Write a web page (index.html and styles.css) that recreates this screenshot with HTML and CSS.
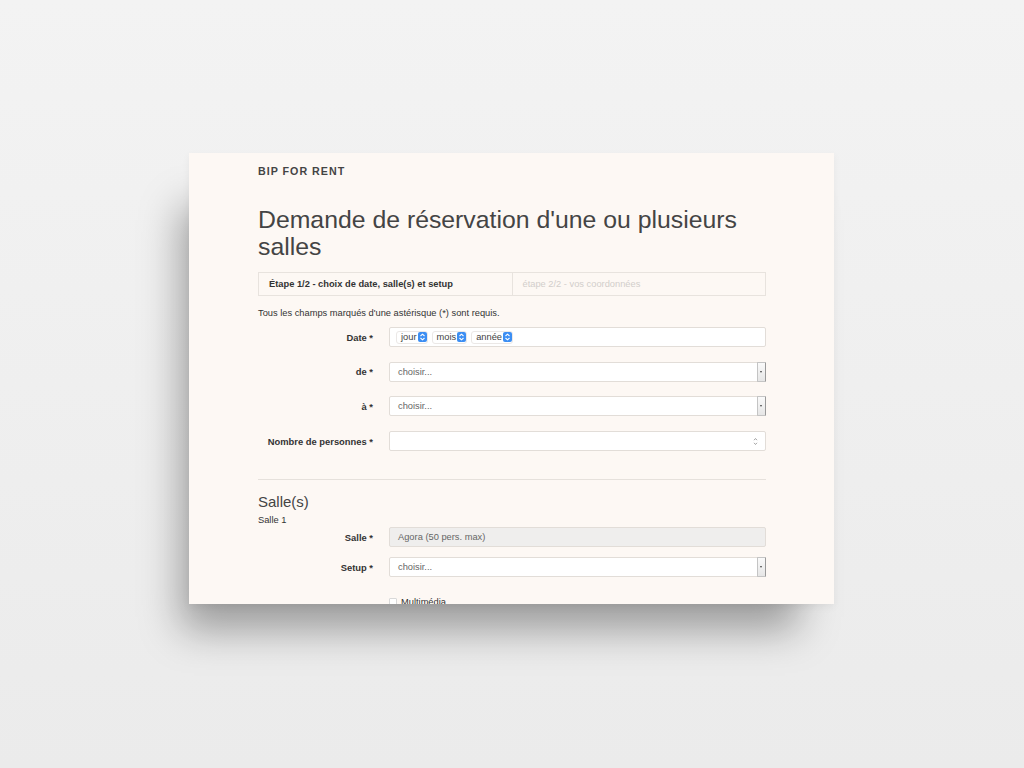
FILE: index.html
```html
<!DOCTYPE html>
<html lang="fr">
<head>
  <meta charset="UTF-8">
  <meta name="viewport" content="width=device-width, initial-scale=1.0">
  <title>BIP FOR RENT - Réservation</title>
  <link rel="stylesheet" href="styles.css">
</head>
<body>
  <div class="sheet">
    <div class="brand">BIP FOR RENT</div>
    <h1 class="title">Demande de réservation d'une ou plusieurs salles</h1>

    <div class="steps">
      <div class="step active">Étape 1/2 - choix de date, salle(s) et setup</div>
      <div class="step">étape 2/2 - vos coordonnées</div>
    </div>

    <p class="note">Tous les champs marqués d'une astérisque (*) sont requis.</p>

    <div class="form">
      <label class="label">Date *</label>
      <div class="field date">
        <span class="mini">jour<i class="blue"><svg width="7" height="8" viewBox="0 0 7 8"><path d="M1.5 3 L3.5 1.2 L5.5 3 M1.5 5 L3.5 6.8 L5.5 5" fill="none" stroke="#fff" stroke-width="1.1"/></svg></i></span>
        <span class="mini">mois<i class="blue"><svg width="7" height="8" viewBox="0 0 7 8"><path d="M1.5 3 L3.5 1.2 L5.5 3 M1.5 5 L3.5 6.8 L5.5 5" fill="none" stroke="#fff" stroke-width="1.1"/></svg></i></span>
        <span class="mini">année<i class="blue"><svg width="7" height="8" viewBox="0 0 7 8"><path d="M1.5 3 L3.5 1.2 L5.5 3 M1.5 5 L3.5 6.8 L5.5 5" fill="none" stroke="#fff" stroke-width="1.1"/></svg></i></span>
      </div>

      <label class="label">de *</label>
      <div class="field select"><span class="placeholder">choisir...</span><span class="arrow"></span></div>

      <label class="label">à *</label>
      <div class="field select"><span class="placeholder">choisir...</span><span class="arrow"></span></div>

      <label class="label">Nombre de personnes *</label>
      <div class="field number">
        <svg class="spin" width="5" height="9" viewBox="0 0 5 9"><path d="M1 3.2 L2.5 1.5 L4 3.2 M1 5.8 L2.5 7.5 L4 5.8" fill="none" stroke="#999" stroke-width="0.9"/></svg>
      </div>
    </div>

    <hr class="rule">

    <h2 class="section">Salle(s)</h2>
    <div class="sub">Salle 1</div>

    <div class="form tight">
      <label class="label">Salle *</label>
      <div class="field disabled"><span>Agora (50 pers. max)</span></div>

      <label class="label">Setup *</label>
      <div class="field select"><span class="placeholder">choisir...</span><span class="arrow"></span></div>

      <span></span>
      <div class="check"><span class="box"></span>Multimédia</div>
    </div>
  </div>
</body>
</html>
```

FILE: styles.css
```css
body {
  margin: 0;
  height: 768px;
  overflow: hidden;
  background: linear-gradient(#f3f3f3, #ebebeb);
  font-family: "Liberation Sans", Arial, sans-serif;
}
.sheet {
  width: 645px;
  height: 451px;
  margin: 153px 0 0 189px;
  padding: 11px 68px 0 69px;
  box-sizing: border-box;
  background: #fdf8f4;
  overflow: hidden;
  box-shadow: -22px 40px 38px -14px rgba(0,0,0,0.34), 0 3px 8px rgba(0,0,0,0.05);
  color: #333;
}
.brand {
  font-size: 10.7px;
  line-height: 14px;
  font-weight: bold;
  letter-spacing: 1px;
  color: #444;
}
.title {
  margin: 28px 0 0;
  font-size: 24.8px;
  line-height: 27px;
  font-weight: normal;
  color: #444;
}
.steps {
  display: flex;
  margin-top: 12px;
  height: 24px;
  border: 1px solid #e8e3de;
  box-sizing: border-box;
}
.step {
  flex: 1;
  padding-left: 10px;
  font-size: 9.3px;
  line-height: 22px;
  color: #d2cecb;
}
.step.active {
  font-weight: bold;
  color: #333;
  border-right: 1px solid #e8e3de;
}
.note {
  margin: 11px 0 0;
  font-size: 9.3px;
  line-height: 12px;
}
.form {
  display: grid;
  grid-template-columns: 115px 1fr;
  column-gap: 16px;
  row-gap: 14.7px;
  align-items: center;
  margin-top: 8px;
}
.form.tight {
  margin-top: 1px;
  row-gap: 10px;
}
.label {
  text-align: right;
  font-size: 9.4px;
  font-weight: bold;
  color: #333;
}
.field {
  position: relative;
  height: 20px;
  box-sizing: border-box;
  border: 1px solid #e2ddd8;
  border-radius: 2px;
  background: #fff;
  display: flex;
  align-items: center;
  padding-left: 8px;
  font-size: 9.3px;
  color: #555;
}
.field.disabled {
  background: #efeeed;
  color: #666;
}
.placeholder {
  color: #666;
}
.arrow {
  position: absolute;
  right: -1px;
  top: -1px;
  bottom: -1px;
  width: 7px;
  background: linear-gradient(#fafafa, #e6e6e6);
  border: 1px solid #c4c4c4;
  border-right-color: #999;
  border-radius: 1px;
}
.arrow::after {
  content: "";
  position: absolute;
  left: 2px;
  top: 8px;
  border-left: 1.5px solid transparent;
  border-right: 1.5px solid transparent;
  border-top: 2px solid #444;
}
.spin {
  position: absolute;
  right: 7px;
  top: 5px;
}
.date {
  gap: 4px;
  padding-left: 6px;
}
.mini {
  display: inline-flex;
  align-items: center;
  height: 13px;
  padding-left: 4px;
  border: 1px solid #ebe8e6;
  border-radius: 3px;
  box-sizing: border-box;
  font-size: 9.3px;
  color: #444;
}
.blue {
  display: inline-flex;
  align-items: center;
  justify-content: center;
  width: 9px;
  height: 10px;
  margin-left: 1px;
  border-radius: 2px;
  background: #3c8ef3;
}
.rule {
  margin: 28px 0 0;
  border: 0;
  border-top: 1px solid #e6e1dc;
}
.section {
  margin: 13px 0 0;
  font-size: 15px;
  line-height: 18px;
  font-weight: normal;
  color: #444;
}
.sub {
  margin-top: 3px;
  font-size: 9.3px;
  line-height: 12px;
}
.check {
  display: flex;
  align-items: center;
  gap: 4px;
  font-size: 9.3px;
  margin-top: 10px;
  color: #333;
}
.check .box {
  width: 6px;
  height: 7px;
  border: 1px solid #d9d9d9;
  border-radius: 1px;
  background: #fff;
}
```
